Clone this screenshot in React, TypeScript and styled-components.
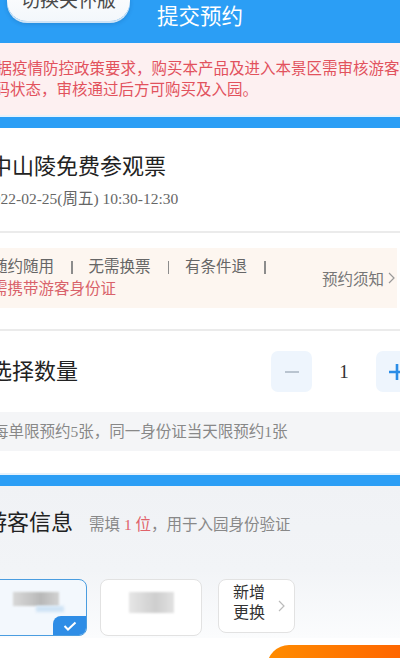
import React from "react";
import styled, { createGlobalStyle } from "styled-components";

const Global = createGlobalStyle`
  html, body { margin: 0; padding: 0; background: #fff; }
  body {
    width: 400px; height: 658px; overflow: hidden;
    font-family: "Liberation Serif", "Noto Sans CJK SC", serif;
  }
  * { box-sizing: border-box; }
`;

const BLUE = "#2b9ef5";

const Page = styled.div`
  width: 400px;
  height: 658px;
  overflow: hidden;
  background: #fff;
`;

const Header = styled.header`
  height: 43px;
  background: ${BLUE};
  display: grid;
  grid-template-columns: 1fr auto 1fr;
  align-items: start;
`;

const CareButton = styled.div`
  justify-self: start;
  margin: -19px 0 0 7px;
  width: 123px;
  height: 40px;
  border-radius: 20px;
  background: linear-gradient(#ffffff, #f3f7fb);
  box-shadow: 0 2px 0 #cfe4f6, 0 3px 4px rgba(0, 40, 90, 0.18);
  display: flex;
  align-items: center;
  justify-content: center;
  font-size: 19px;
  line-height: 40px;
  color: #4a4a4a;
`;

const Title = styled.h1`
  margin: 0;
  font-weight: normal;
  font-size: 21.5px;
  line-height: 34px;
  color: #fff;
`;

const Content = styled.div`
  margin-left: -23px;
  width: 455px;
`;

const Notice = styled.div`
  background: #fdf0f1;
  padding: 15px 0 15px 2px;
  color: #e2525d;
  font-size: 15.5px;
  line-height: 21px;
  overflow: hidden;
`;

const Line = styled.div<{ $shift?: number }>`
  margin-left: ${(p) => p.$shift || 0}px;
  white-space: nowrap;
`;

const BlueBar = styled.div<{ $h: number }>`
  height: ${(p) => p.$h}px;
  background: ${BLUE};
  border-top: 2px solid #e6f2fc;
`;

const Section = styled.section<{ $pt: number; $pb: number; $line?: boolean; $bg?: string }>`
  padding: ${(p) => p.$pt}px 15px ${(p) => p.$pb}px 15px;
  background: ${(p) => p.$bg || "#fff"};
  border-bottom: ${(p) => (p.$line ? "2px solid #ebebeb" : "none")};
`;

const BigTitle = styled.div<{ $shift?: number; $lh?: number }>`
  margin-left: ${(p) => p.$shift || 0}px;
  font-size: 22px;
  line-height: ${(p) => p.$lh || 30}px;
  color: #222;
  white-space: nowrap;
`;

const DateText = styled.div`
  margin: 7px 0 0 -7px;
  font-size: 15.5px;
  line-height: 20px;
  color: #666;
  white-space: nowrap;
`;

const TagBox = styled.div`
  margin: 0 20px 0 -15px;
  padding: 8px 2px 8px 15px;
  background: #fdf6f0;
  display: flex;
  align-items: center;
  justify-content: space-between;
`;

const TagLines = styled.div`
  font-size: 15.5px;
  line-height: 22px;
`;

const TagRow = styled.div`
  display: flex;
  align-items: center;
  color: #666;
  white-space: nowrap;
`;

const Sep = styled.span`
  display: inline-block;
  width: 1.5px;
  height: 13px;
  background: #8c8c8c;
  margin: 0 16px 0 17px;
`;

const RedRow = styled.div`
  color: #d9626a;
  white-space: nowrap;
`;

const NoticeLink = styled.div`
  display: flex;
  align-items: center;
  gap: 4px;
  font-size: 15.5px;
  color: #777;
  white-space: nowrap;
`;

const QtyRow = styled.div`
  display: flex;
  align-items: center;
  justify-content: space-between;
  height: 41px;
`;

const Stepper = styled.div`
  display: flex;
  align-items: center;
`;

const StepBtn = styled.div`
  width: 41px;
  height: 41px;
  border-radius: 7px;
  background: #eef5fd;
  display: flex;
  align-items: center;
  justify-content: center;
`;

const Count = styled.div`
  width: 64px;
  text-align: center;
  font-size: 19px;
  color: #333;
`;

const LimitNote = styled.div`
  margin: 20px -15px 0 -15px;
  padding-left: 16px;
  height: 39px;
  line-height: 39px;
  background: #f4f5f7;
  font-size: 15.5px;
  color: #888;
  white-space: nowrap;
`;

const Visitor = styled.section`
  padding: 22px 15px 2px 8px;
  background: linear-gradient(#f0f2f5 0%, #f2f4f7 55%, #fbfcfd 100%);
`;

const VisitorHead = styled.div`
  display: flex;
  align-items: center;
  gap: 16px;
`;

const SubText = styled.span`
  font-size: 15.5px;
  color: #888;
  white-space: nowrap;
`;

const Red = styled.span`
  color: #e0626a;
`;

const Cards = styled.div`
  margin-top: 41px;
  display: flex;
  align-items: flex-start;
`;

const Card = styled.div<{ $active?: boolean }>`
  position: relative;
  width: 102px;
  height: 57px;
  margin-right: ${(p) => (p.$active ? 13 : 16)}px;
  border-radius: 8px;
  border: 1px solid ${(p) => (p.$active ? "#4a9de0" : "#e2e2e2")};
  background: ${(p) => (p.$active ? "#f3f8fd" : "#fff")};
  display: flex;
  flex-direction: column;
  align-items: center;
  padding-top: 12px;
  overflow: hidden;
`;

const Redact = styled.div<{ $w: number; $h: number; $tone: string }>`
  width: ${(p) => p.$w}px;
  height: ${(p) => p.$h}px;
  background: ${(p) => p.$tone};
  filter: blur(1px);
`;

const Smear = styled.div`
  width: 28px;
  height: 6px;
  margin-left: 28px;
  background: #cfe3f5;
  filter: blur(1.5px);
`;

const Check = styled.div`
  position: absolute;
  right: 0;
  bottom: 0;
  width: 33px;
  height: 19px;
  border-top-left-radius: 8px;
  background: #2e8de6;
  display: flex;
  align-items: center;
  justify-content: center;
`;

const AddCard = styled.div`
  width: 77px;
  height: 54px;
  border-radius: 8px;
  border: 1px solid #e2e2e2;
  background: #fff;
  display: flex;
  align-items: center;
  padding: 0 9px 0 14px;
  justify-content: space-between;
`;

const AddText = styled.div`
  font-size: 16px;
  line-height: 20px;
  color: #333;
  margin-top: -6px;
`;

const BottomBar = styled.div`
  padding: 7px 0 0 267px;
  background: #fff;
`;

const SubmitBtn = styled.div`
  width: 170px;
  height: 44px;
  border-radius: 22px;
  background: linear-gradient(90deg, #ff8c00, #ff5c00);
`;

const Chevron = ({ color = "#999" }: { color?: string }) => (
  <svg width="7" height="12" viewBox="0 0 7 12">
    <path d="M1 1l5 5-5 5" fill="none" stroke={color} strokeWidth="1.2" />
  </svg>
);

export default function App() {
  return (
    <Page>
      <Global />
      <Header>
        <CareButton>切换关怀版</CareButton>
        <Title>提交预约</Title>
        <div />
      </Header>
      <Content>
        <Notice>
          <Line $shift={2}>根据疫情防控政策要求，购买本产品及进入本景区需审核游客健康</Line>
          <Line>康码状态，审核通过后方可购买及入园。</Line>
        </Notice>
        <BlueBar $h={13} />
        <Section $pt={24} $pb={22} $line>
          <BigTitle $shift={-2}>中山陵免费参观票</BigTitle>
          <DateText>2022-02-25(周五) 10:30-12:30</DateText>
        </Section>
        <Section $pt={15} $pb={21} $line>
          <TagBox>
            <TagLines>
              <TagRow>
                随约随用<Sep />无需换票<Sep />有条件退<Sep />
              </TagRow>
              <RedRow>需携带游客身份证</RedRow>
            </TagLines>
            <NoticeLink>
              预约须知
              <Chevron />
            </NoticeLink>
          </TagBox>
        </Section>
        <Section $pt={20} $pb={22}>
          <QtyRow>
            <BigTitle $shift={-2} $lh={41}>选择数量</BigTitle>
            <Stepper>
              <StepBtn>
                <svg width="16" height="16" viewBox="0 0 16 16">
                  <path d="M1 8h14" stroke="#b9c4d0" strokeWidth="2" />
                </svg>
              </StepBtn>
              <Count>1</Count>
              <StepBtn>
                <svg width="18" height="18" viewBox="0 0 18 18">
                  <path d="M1 9h16M9 1v16" stroke="#2a8ce6" strokeWidth="2.6" />
                </svg>
              </StepBtn>
            </Stepper>
          </QtyRow>
          <LimitNote>每单限预约5张，同一身份证当天限预约1张</LimitNote>
        </Section>
        <BlueBar $h={13} />
        <Visitor>
          <VisitorHead>
            <BigTitle>游客信息</BigTitle>
            <SubText>
              需填 <Red>1 位</Red>，用于入园身份验证
            </SubText>
          </VisitorHead>
          <Cards>
            <Card $active>
              <Redact $w={46} $h={14} $tone="linear-gradient(90deg,#d8d8d8,#c4c4c4 40%,#b8b8b8 60%,#d2d2d2)" />
              <Smear />
              <Check>
                <svg width="14" height="10" viewBox="0 0 14 10">
                  <path d="M1.5 5l3.5 3.5L12.5 1.5" fill="none" stroke="#fff" strokeWidth="2" />
                </svg>
              </Check>
            </Card>
            <Card>
              <Redact $w={45} $h={21} $tone="linear-gradient(90deg,#e6e6e6,#d6d6d6 40%,#cecece 60%,#e2e2e2)" />
            </Card>
            <AddCard>
              <AddText>
                新增
                <br />
                更换
              </AddText>
              <Chevron color="#bbb" />
            </AddCard>
          </Cards>
        </Visitor>
      </Content>
      <BottomBar>
        <SubmitBtn />
      </BottomBar>
    </Page>
  );
}
